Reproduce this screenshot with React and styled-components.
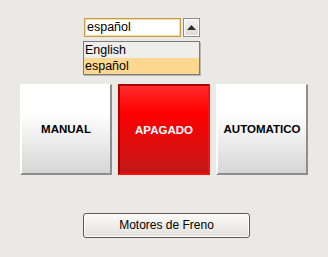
import React, { useState } from 'react';
import styled, { createGlobalStyle, css } from 'styled-components';

const GlobalStyle = createGlobalStyle`
  html, body {
    margin: 0;
    padding: 0;
    background: #ebe9e5;
  }
  body {
    font-family: "Liberation Sans", Arial, sans-serif;
  }
`;

const LANGS = ['English', 'español'];

const MODES = [
  { key: 'manual', label: 'MANUAL' },
  { key: 'off', label: 'APAGADO' },
  { key: 'auto', label: 'AUTOMATICO' },
];

function ArrowUp() {
  return (
    <svg width="9" height="5" viewBox="0 0 9 5">
      <path d="M0 5 L4.5 0 L9 5 Z" fill="#2e2e2e" />
    </svg>
  );
}

function App() {
  const [lang, setLang] = useState('español');
  const [mode, setMode] = useState('off');

  return (
    <>
      <GlobalStyle />
      <Styled.Page>
        <Styled.Combo>
          <Styled.Field>{lang}</Styled.Field>
          <Styled.ArrowButton>
            <ArrowUp />
          </Styled.ArrowButton>
          <Styled.Popup>
            {LANGS.map(l => (
              <Styled.Option key={l} selected={l === lang} onClick={() => setLang(l)}>
                {l}
              </Styled.Option>
            ))}
          </Styled.Popup>
        </Styled.Combo>

        <Styled.ModeRow>
          {MODES.map(m => (
            <Styled.ModeButton key={m.key} active={m.key === mode} onClick={() => setMode(m.key)}>
              {m.label}
            </Styled.ModeButton>
          ))}
        </Styled.ModeRow>

        <Styled.Footer>
          <Styled.PlainButton>Motores de Freno</Styled.PlainButton>
        </Styled.Footer>
      </Styled.Page>
    </>
  );
}

const Styled = {
  Page: styled.div`
    width: 328px;
    height: 257px;
    display: flex;
    flex-direction: column;
    box-sizing: border-box;
    padding-top: 18px;
  `,
  Combo: styled.div`
    position: relative;
    display: flex;
    align-items: stretch;
    gap: 2px;
    margin-left: 84px;
    height: 19px;
    width: 116px;
  `,
  Field: styled.div`
    box-sizing: border-box;
    width: 97px;
    height: 19px;
    border: 1px solid #c79b45;
    box-shadow: inset 0 0 0 1px #f3dfa8;
    background: #ffffff;
    font-size: 12.5px;
    line-height: 17px;
    padding-left: 2px;
    color: #000;
  `,
  ArrowButton: styled.div`
    box-sizing: border-box;
    width: 17px;
    height: 19px;
    border: 1px solid #8c8c8c;
    box-shadow: inset 0 0 0 1px #fbfbfb;
    background: linear-gradient(#f4f3f0, #dcdad4);
    display: flex;
    align-items: center;
    justify-content: center;
    padding-bottom: 1px;
  `,
  Popup: styled.div`
    position: absolute;
    top: 23px;
    left: -1px;
    width: 117px;
    box-sizing: border-box;
    border: 1px solid #7b7b7b;
    box-shadow: 1px 1px 0 #b9b7b2;
    background: #eeeeec;
    display: flex;
    flex-direction: column;
    z-index: 2;
  `,
  Option: styled.div`
    height: 16px;
    line-height: 16px;
    font-size: 12.5px;
    padding-left: 1px;
    color: #000;
    background: ${p => (p.selected ? '#fcd78f' : 'transparent')};
    cursor: default;
  `,
  ModeRow: styled.div`
    display: flex;
    gap: 6px;
    margin-top: 47px;
    margin-left: 20px;
  `,
  ModeButton: styled.div`
    box-sizing: border-box;
    width: 92px;
    height: 91px;
    display: flex;
    align-items: center;
    justify-content: center;
    font-size: 11.5px;
    font-weight: bold;
    cursor: pointer;
    ${p =>
      p.active
        ? css`
            color: #ffffff;
            border-top: 2px solid #a80000;
            border-left: 2px solid #a80000;
            border-right: 2px solid #ff1010;
            border-bottom: 2px solid #ff1010;
            background: linear-gradient(#ff2c2c 0%, #ff0000 30%, #e40a0a 60%, #c21818 100%);
          `
        : css`
            color: #000000;
            border-top: 1px solid #ffffff;
            border-left: 2px solid #ffffff;
            border-right: 2px solid #8e8e8e;
            border-bottom: 2px solid #8e8e8e;
            background: linear-gradient(#ffffff 0%, #ffffff 32%, #d6d6d6 100%);
          `}
  `,
  Footer: styled.div`
    display: flex;
    margin-top: 38px;
    margin-left: 83px;
  `,
  PlainButton: styled.div`
    box-sizing: border-box;
    width: 167px;
    height: 25px;
    border: 1px solid #5a5a5a;
    border-radius: 3px;
    box-shadow: inset 0 0 0 1px #fdfdfc;
    background: linear-gradient(#fbfbfa, #e3e1db);
    font-size: 12px;
    line-height: 23px;
    text-align: center;
    color: #000;
  `,
};

export default App;
